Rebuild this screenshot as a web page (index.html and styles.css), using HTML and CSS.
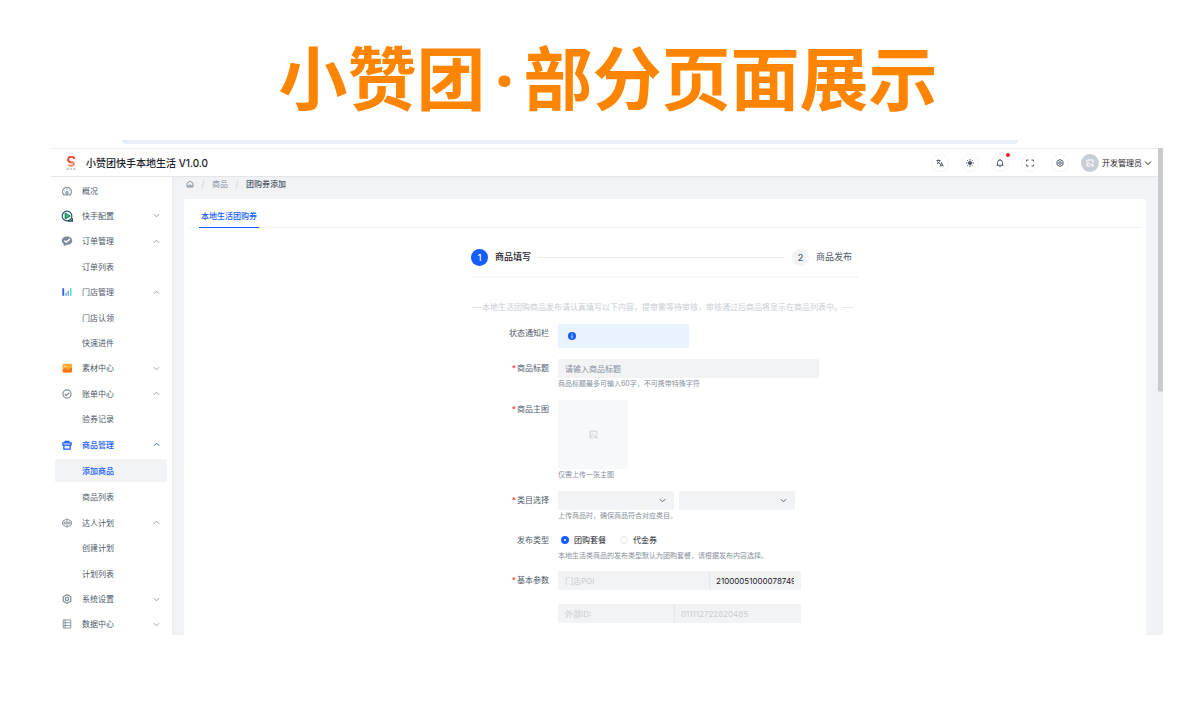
FILE: index.html
```
<!DOCTYPE html>
<html lang="zh-CN">
<head>
    <meta charset="UTF-8">
    <meta name="viewport" content="width=device-width, initial-scale=1.0">
    <title>小赞团·部分页面展示</title>
    <link rel="stylesheet" href="styles.css">
</head>
<body>
    <!-- shared icons -->
    <svg class="sprite" aria-hidden="true">
        <symbol id="down" viewBox="0 0 8 8"><path d="M1 2.500 4 5.500 7 2.500"/></symbol>
        <symbol id="up" viewBox="0 0 8 8"><path d="M1 5.500 4 2.500 7 5.500"/></symbol>
        <symbol id="gear" viewBox="0 0 16 16"><path d="M8 1 14 4.500V11.500L8 15 2 11.500V4.500Z"/><circle cx="8" cy="8" r="2.600"/></symbol>
        <symbol id="picture" viewBox="0 0 16 16"><path d="M8 14H2V2H14V8M2 12 6 8 9 10.500M5 5H6.500"/><circle cx="12" cy="12" r="2"/><path d="M13.500 13.500 15 15"/></symbol>
    </svg>

    <h1 class="headline">小赞团<span class="middot">·</span>部分页面展示</h1>
    <div class="browser-bar"></div>

    <div class="window">
        <div class="app">
            <header class="topbar">
                <svg class="logo" viewBox="0 0 14 14">
                    <path d="M10.500 3.200A3.200 2.800 0 1 0 6.500 6.200L8.500 6.500" fill="none" stroke="#f0503c" stroke-width="2"/>
                    <path d="M4.500 8.500A3 2.500 0 0 0 10 8C10 6.500 9 6 7.500 6" fill="none" stroke="#f58b6c" stroke-width="2"/>
                    <path d="M2.500 13H5M6 13H8M9 13H11.500" stroke="#999" stroke-width="1"/>
                </svg>
                <span class="brand">小赞团快手本地生活 V1.0.0</span>
                <div class="tools">
                    <button class="tool" aria-label="语言"><svg viewBox="0 0 16 16"><path d="M1 3H9M5 1V3M2 9C5 8 7.500 6 8 3M2.500 4.500C4 7 5.500 8.500 8 9M8 15 11 7 14.500 15M9 12.500H13.500"/></svg></button>
                    <button class="tool" aria-label="主题"><svg viewBox="0 0 16 16"><circle cx="8" cy="8" r="3" fill="currentColor"/><path d="M8 0V3M8 13V16M0 8H3M13 8H16M2.500 2.500 4.500 4.500M11.500 11.500 13.500 13.500M13.500 2.500 11.500 4.500M4.500 11.500 2.500 13.500"/></svg></button>
                    <button class="tool" aria-label="消息"><svg viewBox="0 0 16 16"><path d="M1 12.500H15M3 12.500V7A5 5 0 0 1 13 7V12.500M8 0V2M6 15.500H10"/></svg><i class="dot"></i></button>
                    <button class="tool" aria-label="全屏"><svg viewBox="0 0 16 16"><path d="M1 5V2H5M11 2H15V5M15 11V14H11M5 14H1V11"/></svg></button>
                    <button class="tool" aria-label="设置"><svg><use href="#gear"/></svg></button>
                    <span class="avatar"><svg><use href="#picture"/></svg></span>
                </div>
                <button class="user">开发管理员 <svg><use href="#down"/></svg></button>
            </header>

            <div class="body">
                <nav class="sidebar">
                    <ul>
                        <li><a href="#"><svg class="icon" viewBox="0 0 16 16"><path d="M5 14H3A7 7 0 1 1 13 14H11M8 4V6M4 7.500 5 8M12 7.500 11 8M6.500 14V10.500A1.500 1.500 0 0 1 9.500 10.500V14Z"/></svg>概况</a></li>
                        <li><a href="#"><svg class="icon big" viewBox="0 0 16 16"><circle cx="8" cy="8" r="6.500" fill="#e9fff3" stroke="#22505a" stroke-width="1.500"/><path d="M5.500 4 12.500 8 5.500 12Z" fill="#21c770" stroke="#22505a" stroke-width="1"/><path d="M9 14.500H15V11" stroke="#22505a"/></svg>快手配置<svg class="arrow"><use href="#down"/></svg></a></li>
                        <li><a href="#"><svg class="icon big" viewBox="0 0 16 16"><path d="M8 2C12 2 15 4.300 15 7.500S12 13 8 13L4 14.500 3.500 12C-1 8.500 1 2 8 2Z" fill="#7c899c" stroke="none"/><path d="M4.500 7.500 7 9.500 12 5.500" stroke="#fff" stroke-width="1.800"/></svg>订单管理<svg class="arrow"><use href="#up"/></svg></a></li>
                        <li><a class="sub" href="#">订单列表</a></li>
                        <li><a href="#"><svg class="icon" viewBox="0 0 16 16"><path d="M2 2V14" stroke="#3565d8" stroke-width="3"/><path d="M6.500 9V14M10 6V14" stroke="#48a4ee" stroke-width="2"/><path d="M14 2V14" stroke="#54dadd" stroke-width="2.500"/></svg>门店管理<svg class="arrow"><use href="#up"/></svg></a></li>
                        <li><a class="sub" href="#">门店认领</a></li>
                        <li><a class="sub" href="#">快速进件</a></li>
                        <li><a href="#"><svg class="icon" viewBox="0 0 16 16"><rect x="1" y="1" width="15" height="14" rx="2" fill="#ffac2f" stroke="none"/><path d="M1 11 5 8 9 11 16 7V13A2 2 0 0 1 14 15H3A2 2 0 0 1 1 13Z" fill="#ff7417" stroke="none"/><circle cx="5" cy="5" r="1.200" fill="#fff" stroke="none"/></svg>素材中心<svg class="arrow"><use href="#down"/></svg></a></li>
                        <li><a href="#"><svg class="icon" viewBox="0 0 16 16"><circle cx="8" cy="8" r="6.500"/><path d="M4.500 8 7 10.500 11.500 6"/></svg>账单中心<svg class="arrow"><use href="#up"/></svg></a></li>
                        <li><a class="sub" href="#">验券记录</a></li>
                        <li><a class="current" href="#"><svg class="icon" viewBox="0 0 16 16"><path d="M1.500 4.500H14.500V8H1.500ZM3 8V14.500H13V8M5 4.500V2H11V4.500"/></svg>商品管理<svg class="arrow"><use href="#up"/></svg></a></li>
                        <li><a class="sub current selected" href="#">添加商品</a></li>
                        <li><a class="sub" href="#">商品列表</a></li>
                        <li><a href="#"><svg class="icon" viewBox="0 0 16 16"><path d="M8 1.500 15 5V11L8 14.500 1 11V5ZM1 8H15M8 1.500V14.500M4.500 5.500V10.500M11.500 5.500V10.500" stroke-width="1.500"/></svg>达人计划<svg class="arrow"><use href="#up"/></svg></a></li>
                        <li><a class="sub" href="#">创建计划</a></li>
                        <li><a class="sub" href="#">计划列表</a></li>
                        <li><a href="#"><svg class="icon"><use href="#gear"/></svg>系统设置<svg class="arrow"><use href="#down"/></svg></a></li>
                        <li><a href="#"><svg class="icon" viewBox="0 0 16 16"><path d="M2 1.500H14V14.500H2ZM2 6H14M2 10.500H14M5 1.500V14.500" stroke-width="1.500"/></svg>数据中心<svg class="arrow"><use href="#down"/></svg></a></li>
                    </ul>
                </nav>

                <main class="main">
                    <div class="breadcrumb">
                        <svg viewBox="0 0 16 16"><path d="M2 6.500 8 2 14 6.500V14H2ZM5.500 14V10.500H10.500V14"/></svg>
                        <i>/</i><span>商品</span><i>/</i><b>团购券添加</b>
                    </div>

                    <section class="card">
                        <div class="tabs"><a class="tab" href="#">本地生活团购券</a></div>

                        <form class="form">
                            <div class="steps">
                                <span class="num active">1</span><b>商品填写</b>
                                <span class="line"></span>
                                <span class="num">2</span><span>商品发布</span>
                            </div>
                            <p class="notice">---本地生活团购商品发布请认真填写以下内容，提审需等待审核，审核通过后商品将显示在商品列表中。---</p>

                            <div class="row">
                                <span class="label">状态通知栏</span>
                                <div class="alert"><svg viewBox="0 0 16 16"><circle cx="8" cy="8" r="8" fill="#165dff" stroke="none"/><path d="M8 3.500V5.500M8 7V12.500" stroke="#fff" stroke-width="2"/></svg></div>
                            </div>

                            <div class="row">
                                <label class="label required" for="title">商品标题</label>
                                <div class="field">
                                    <input class="control title-input" id="title" type="text" placeholder="请输入商品标题">
                                    <p class="help">商品标题最多可输入60字，不可携带特殊字符</p>
                                </div>
                            </div>

                            <div class="row">
                                <span class="label required">商品主图</span>
                                <div class="field">
                                    <button class="upload" type="button" aria-label="上传主图"><svg><use href="#picture"/></svg></button>
                                    <p class="help">仅需上传一张主图</p>
                                </div>
                            </div>

                            <div class="row tight">
                                <label class="label required" for="category">类目选择</label>
                                <div class="field">
                                    <div class="selects">
                                        <div class="select"><select class="control" id="category"><option></option></select><svg><use href="#down"/></svg></div>
                                        <div class="select"><select class="control" aria-label="子类目"><option></option></select><svg><use href="#down"/></svg></div>
                                    </div>
                                    <p class="help">上传商品时，确保商品符合对应类目。</p>
                                </div>
                            </div>

                            <div class="row tight">
                                <span class="label">发布类型</span>
                                <div class="field">
                                    <div class="radios">
                                        <label><input type="radio" name="type" checked>团购套餐</label>
                                        <label><input type="radio" name="type">代金券</label>
                                    </div>
                                    <p class="help">本地生活类商品的发布类型默认为团购套餐，请根据发布内容选择。</p>
                                </div>
                            </div>

                            <div class="row">
                                <label class="label required" for="poi">基本参数</label>
                                <div class="field params">
                                    <div class="pair poi">
                                        <input class="control" type="text" placeholder="门店POI" aria-label="门店POI">
                                        <input class="control" id="poi" type="text" value="21000051000078749">
                                    </div>
                                    <div class="pair outer">
                                        <input class="control" type="text" placeholder="外部ID:" aria-label="外部ID">
                                        <input class="control" type="text" placeholder="011112722820485" aria-label="外部ID值">
                                    </div>
                                </div>
                            </div>
                        </form>
                    </section>
                </main>
            </div>
        </div>
        <div class="scrollbar"></div>
    </div>
</body>
</html>
```

FILE: styles.css
```
* {
    box-sizing: border-box;
}
body {
    margin: 0;
    background: #fff;
    color: #4e5969;
    font-family: Inter, "Noto Sans CJK SC", sans-serif;
    font-size: 8px;
    line-height: 12px;
}
a {
    color: inherit;
    text-decoration: none;
}
p {
    margin: 0;
}
b {
    font-weight: 500;
}
i {
    font-style: normal;
}
button, input, select {
    border: 0;
    padding: 0;
    margin: 0;
    color: inherit;
    font: inherit;
}
button {
    background: none;
    cursor: pointer;
}
svg {
    display: block;
    flex: none;
    width: 8px;
    height: 8px;
    fill: none;
    stroke: currentColor;
    stroke-width: 1;
}
.sprite {
    position: absolute;
    width: 0;
    height: 0;
}

.headline {
    height: 140px;
    margin: 0;
    padding: 25px 0 0 16px;
    color: #ff8400;
    font-family: "Noto Sans CJK SC", sans-serif;
    font-size: 69px;
    font-weight: 700;
    line-height: 100px;
    text-align: center;
}
.middot {
    display: inline-block;
    width: 38px;
    font-family: "Noto Sans", sans-serif;
}
.browser-bar {
    height: 4px;
    margin: 0 182px 4px 122px;
    background: #e9edf6;
    border-radius: 0 0 6px 6px;
}
.window {
    display: flex;
    margin: 0 37px 0 51px;
}
.app {
    flex: 1;
    min-width: 0;
}
.scrollbar {
    width: 5px;
    background: linear-gradient(#c9cacc, #c9cacc) no-repeat 0 0 / 5px 50%, #f2f2f3;
}

/* top bar */
.topbar {
    display: flex;
    align-items: center;
    height: 29px;
    padding: 0 6px 0 13px;
    border-top: 1px solid #f0f0f1;
    border-bottom: 1px solid #e5e6eb;
}
.logo {
    width: 14px;
    height: 14px;
}
.brand {
    flex: 1;
    margin-left: 8px;
    color: #1d2129;
    font-size: 10px;
    font-weight: 500;
}
.tools {
    display: flex;
    gap: 12px;
}
.tool {
    position: relative;
    display: grid;
    place-items: center;
    width: 18px;
    height: 18px;
    border: 1px solid #f4f5f7;
    border-radius: 50%;
}
.tool svg {
    stroke-width: 2;
}
.dot {
    position: absolute;
    top: -2px;
    right: -2px;
    width: 4px;
    height: 4px;
    border-radius: 50%;
    background: #f5222d;
}
.avatar {
    display: grid;
    place-items: center;
    width: 18px;
    height: 18px;
    border-radius: 50%;
    background: #c9cdd4;
    color: #fff;
}
.avatar svg {
    stroke-width: 2;
}
.user {
    display: flex;
    align-items: center;
    gap: 2px;
    margin-left: 3px;
    color: #1d2129;
}

/* side menu */
.body {
    display: flex;
}
.sidebar {
    width: 121px;
    padding: 3px 5px 0 4px;
}
.sidebar ul {
    display: flex;
    flex-direction: column;
    justify-content: space-between;
    height: 100%;
    margin: 0;
    padding: 0;
    list-style: none;
}
.sidebar a {
    display: flex;
    align-items: center;
    height: 21px;
    padding: 0 7px;
}
.sidebar .sub {
    padding-left: 27px;
}
.sidebar .current {
    color: #165dff;
    font-weight: 500;
}
.sidebar .selected {
    height: 23px;
    background: #f2f3f5;
    border-radius: 1px;
}
.icon {
    width: 10px;
    height: 10px;
    margin-right: 10px;
    color: #86909c;
    stroke-width: 2;
}
.icon.big {
    width: 12px;
    height: 12px;
    margin: 0 9px 0 -1px;
}
.current .icon {
    color: #165dff;
}
.arrow {
    width: 7px;
    height: 7px;
    margin-left: auto;
    color: #86909c;
}
.current .arrow {
    color: #165dff;
}

/* content */
.main {
    flex: 1;
    min-width: 0;
    padding: 0 12px;
    background: #f2f3f5;
    box-shadow: inset 1px 0 2px #eaebed;
}
.breadcrumb {
    display: flex;
    align-items: center;
    height: 22px;
    padding: 0 2px 8px;
    color: #86909c;
}
.breadcrumb svg {
    stroke-width: 2;
}
.breadcrumb i {
    width: 18px;
    color: #c9cdd4;
    text-align: center;
}
.breadcrumb b {
    color: #4e5969;
}
.card {
    padding: 0 5px 1px;
    background: #fff;
    border-radius: 2px;
}
.tabs {
    display: flex;
    height: 29px;
    padding: 6px 10px 0;
    border-bottom: 1px solid #f2f3f5;
}
.tab {
    height: 23px;
    padding: 5px 2px 0;
    border-bottom: 1px solid #165dff;
    color: #165dff;
    font-weight: 500;
}

.form {
    width: 388px;
    margin: 0 auto;
}
.steps {
    display: flex;
    align-items: center;
    gap: 7px;
    height: 50px;
    padding: 10px 7px 0 0;
    border-bottom: 2px solid #f7f8fa;
    font-size: 9px;
}
.steps b {
    color: #1d2129;
}
.num {
    width: 17px;
    height: 17px;
    border-radius: 50%;
    background: #f2f3f5;
    font-weight: 500;
    line-height: 17px;
    text-align: center;
}
.num.active {
    background: #165dff;
    color: #fff;
}
.line {
    flex: 1;
    height: 1px;
    background: #e9eaee;
}
.notice {
    padding: 23px 0 11px;
    color: #c9cdd4;
    white-space: nowrap;
}
.row {
    display: grid;
    grid-template-columns: 78px 1fr;
    column-gap: 9px;
    margin-bottom: 11px;
}
.row.tight {
    margin-bottom: 10px;
}
.label {
    line-height: 19px;
    text-align: right;
}
.required::before {
    content: "*";
    margin-right: 1px;
    color: #f53f3f;
    font-weight: 600;
}
.control {
    display: block;
    width: 100%;
    height: 19px;
    padding: 0 7px;
    background: #f2f3f5;
    border-radius: 1px;
}
.control::placeholder {
    color: #c9cdd4;
}
.help {
    height: 11px;
    color: #86909c;
    font-size: 7px;
    white-space: nowrap;
}
.alert {
    display: flex;
    align-items: center;
    width: 131px;
    height: 24px;
    padding-left: 10px;
    background: #e8f3ff;
    border-radius: 1px;
}
.title-input {
    width: 261px;
}
.title-input::placeholder {
    color: #86909c;
}
.upload {
    display: grid;
    place-items: center;
    width: 70px;
    height: 69px;
    background: #f7f8fa;
    border-radius: 2px;
    color: #a9aeb8;
}
.upload svg {
    width: 9px;
    height: 9px;
    stroke-width: 1;
}
.selects {
    display: flex;
    gap: 5px;
}
.select {
    position: relative;
    width: 116px;
}
.select select {
    appearance: none;
}
.select svg {
    position: absolute;
    top: 6px;
    right: 8px;
    width: 7px;
    height: 7px;
    pointer-events: none;
}
.radios {
    display: flex;
    gap: 14px;
    height: 18px;
    margin-bottom: 1px;
    padding-left: 3px;
    color: #1d2129;
}
.radios label {
    display: flex;
    align-items: center;
    gap: 5px;
}
.radios input {
    appearance: none;
    width: 8px;
    height: 8px;
    border: 1px solid #e5e6eb;
    border-radius: 50%;
}
.radios input:checked {
    border: 3px solid #165dff;
}
.params {
    display: grid;
    gap: 14px;
}
.pair {
    display: grid;
    width: 243px;
}
.poi {
    grid-template-columns: 151px 92px;
    color: #1d2129;
}
.outer {
    grid-template-columns: 116px 127px;
}
.pair .control + .control {
    padding-left: 6px;
    border-left: 1px solid #e5e6eb;
}
```
